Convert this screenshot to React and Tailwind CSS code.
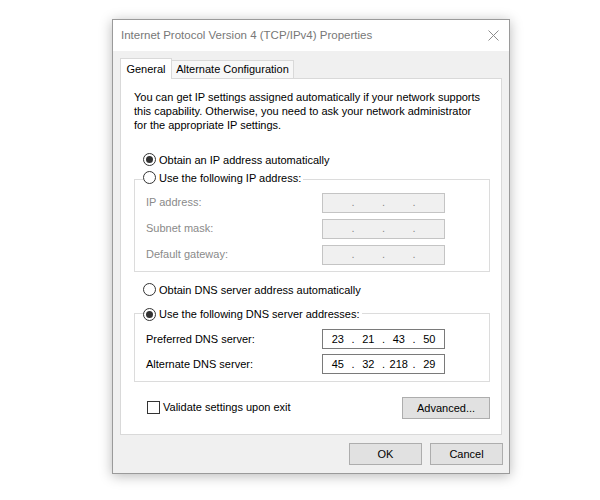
import React from "react";

const FONT = { fontFamily: '"Liberation Sans", Arial, sans-serif' };

function Radio({ checked, label, disabled }) {
  return (
    <span className="inline-flex items-center gap-[3px] bg-white pr-[2px] leading-[14px]">
      <span className="flex h-[13px] w-[13px] items-center justify-center rounded-full border border-[#333333] bg-white">
        {checked && <span className="h-[7px] w-[7px] rounded-full bg-[#333333]" />}
      </span>
      <span className={disabled ? "text-[#8a8a8a]" : "text-black"}>{label}</span>
    </span>
  );
}

function IpField({ parts, disabled }) {
  const segs = parts || ["", "", "", ""];
  return (
    <div
      className={
        "flex h-[20px] w-[123px] items-center px-[2px] " +
        (disabled ? "border border-[#c4c4c4] bg-[#f0f0f0] text-[#8a8a8a]" : "border border-[#7a7a7a] bg-white text-black")
      }
    >
      {segs.map((s, i) => (
        <React.Fragment key={i}>
          {i > 0 && <span className="w-[5px] text-center">.</span>}
          <span className="flex-1 text-center">{s}</span>
        </React.Fragment>
      ))}
    </div>
  );
}

function Row({ label, disabled, parts }) {
  return (
    <div className="flex items-center justify-between pl-[11px] pr-[44px]">
      <span className={disabled ? "text-[#8a8a8a]" : "text-black"}>{label}</span>
      <IpField disabled={disabled} parts={parts} />
    </div>
  );
}

function Button({ children, className }) {
  return (
    <div
      className={
        "flex items-center justify-center border border-[#adadad] bg-[#e1e1e1] text-black " + (className || "")
      }
    >
      {children}
    </div>
  );
}

export default function App() {
  return (
    <div className="h-[500px] w-[600px] overflow-hidden bg-white pl-[112px] pt-[19px] text-[11px]" style={FONT}>
      <div className="flex h-[455px] w-[398px] flex-col border border-[#9a9a9a] bg-[#f0f0f0] shadow-[0_2px_12px_rgba(0,0,0,0.28)]">
        {/* title bar */}
        <div className="flex h-[31px] items-center justify-between bg-white pl-[8px] pr-[9px]">
          <span className="text-[11.5px] text-[#777777]">Internet Protocol Version 4 (TCP/IPv4) Properties</span>
          <svg width="11" height="11" viewBox="0 0 11 11" className="mr-[1px]">
            <path d="M0.5 0.5 L10.5 10.5 M10.5 0.5 L0.5 10.5" stroke="#8c8c8c" strokeWidth="1" fill="none" />
          </svg>
        </div>

        {/* tabs */}
        <div className="mt-[7px] flex items-end pl-[7px]">
          <div className="relative z-10 -mb-px flex h-[21px] w-[52px] items-center justify-center border border-b-0 border-[#d9d9d9] bg-white">
            General
          </div>
          <div className="flex h-[18px] w-[122px] items-center justify-center border border-l-0 border-b-0 border-[#d9d9d9] bg-[#f7f7f7]">
            Alternate Configuration
          </div>
        </div>

        {/* panel */}
        <div className="ml-[7px] mr-[7px] flex h-[357px] flex-col border border-[#d9d9d9] bg-white pl-[13px] pr-[11px]">
          <p className="mt-[11px] leading-[14px] text-black">
            You can get IP settings assigned automatically if your network supports
            <br />
            this capability. Otherwise, you need to ask your network administrator
            <br />
            for the appropriate IP settings.
          </p>

          <div className="mt-[19px] pl-[9px]">
            <Radio checked label="Obtain an IP address automatically" />
          </div>

          <fieldset className="mt-[3px] border border-[#dcdcdc] px-0 pb-[6px]">
            <legend className="ml-[8px]">
              <Radio label="Use the following IP address:" />
            </legend>
            <div className="mt-[4px] flex flex-col gap-[6px]">
              <Row label="IP address:" disabled />
              <Row label="Subnet mask:" disabled />
              <Row label="Default gateway:" disabled />
            </div>
          </fieldset>

          <div className="mt-[11px] pl-[9px]">
            <Radio label="Obtain DNS server address automatically" />
          </div>

          <fieldset className="mt-[5px] border border-[#dcdcdc] px-0 pb-[7px]">
            <legend className="ml-[8px]">
              <Radio checked label="Use the following DNS server addresses:" />
            </legend>
            <div className="mt-[7px] flex flex-col gap-[5px]">
              <Row label="Preferred DNS server:" parts={["23", "21", "43", "50"]} />
              <Row label="Alternate DNS server:" parts={["45", "32", "218", "29"]} />
            </div>
          </fieldset>

          <div className="mt-[15px] flex items-start justify-between">
            <div className="ml-[13px] mt-[2px] flex items-center gap-[3px]">
              <span className="h-[13px] w-[13px] border border-[#333333] bg-white" />
              <span>Validate settings upon exit</span>
            </div>
            <Button className="h-[22px] w-[88px]">Advanced...</Button>
          </div>
        </div>

        {/* footer buttons */}
        <div className="mt-[8px] flex justify-end gap-[8px] pr-[6px]">
          <Button className="h-[22px] w-[73px]">OK</Button>
          <Button className="h-[22px] w-[73px]">Cancel</Button>
        </div>
      </div>
    </div>
  );
}
